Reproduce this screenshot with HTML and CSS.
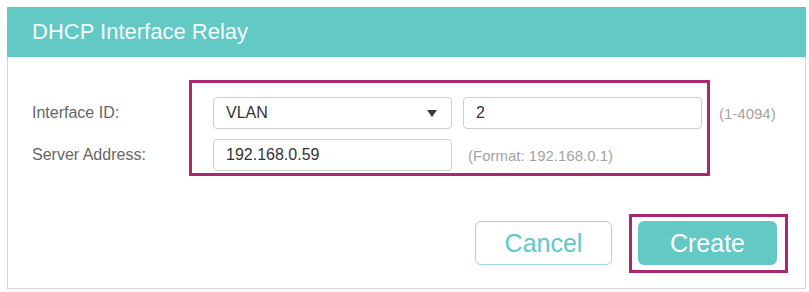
FILE: index.html
```html
<!DOCTYPE html>
<html lang="en">
<head>
    <meta charset="UTF-8">
    <title>DHCP Interface Relay</title>
    <link rel="stylesheet" href="styles.css">
</head>
<body>
    <div class="panel">
        <div class="panel-header">DHCP Interface Relay</div>

        <div class="panel-body">
            <div class="form-row">
                <label class="field-label" for="ifType">Interface ID:</label>
                <div class="select-box" id="ifType">
                    <span>VLAN</span>
                    <span class="caret"></span>
                </div>
                <input class="text-input" type="text" value="2">
                <span class="hint">(1-4094)</span>
            </div>
            <div class="form-row">
                <label class="field-label" for="server">Server Address:</label>
                <input class="text-input" id="server" type="text" value="192.168.0.59">
                <span class="hint hint-format">(Format: 192.168.0.1)</span>
            </div>

            <div class="actions">
                <button class="btn btn-cancel">Cancel</button>
                <button class="btn btn-create">Create</button>
            </div>
        </div>

        <!-- highlight boxes from the tutorial screenshot -->
        <div class="highlight highlight-fields"></div>
        <div class="highlight highlight-create"></div>
    </div>
</body>
</html>
```

FILE: styles.css
```css
body {
    margin: 0;
    background-color: #ffffff;
    font-family: "Liberation Sans", Arial, sans-serif;
}
.panel {
    position: relative;
    margin: 7px 3px 2px 7px;
    border: 1px solid #d4d4d4;
    border-top: none;
    height: 282px;
    box-sizing: border-box;
}
.panel-header {
    height: 50px;
    margin-left: -1px;
    margin-right: -1px;
    background-color: #62c9c5;
    color: #f4fbfb;
    font-size: 22px;
    line-height: 50px;
    padding-left: 25px;
}
.panel-body {
    padding: 40px 28px 0 24px;
}
.form-row {
    display: flex;
    align-items: center;
    height: 32px;
    margin-bottom: 10px;
}
.field-label {
    width: 181px;
    color: #666666;
    font-size: 16px;
}
.select-box, .text-input {
    width: 239px;
    height: 32px;
    box-sizing: border-box;
    border: 1px solid #cfcfcf;
    border-radius: 4px;
    padding: 0 12px;
    font-family: "Liberation Sans", Arial, sans-serif;
    font-size: 16px;
    color: #333333;
    background-color: #ffffff;
}
.select-box {
    display: flex;
    align-items: center;
    justify-content: space-between;
    margin-right: 11px;
    padding-right: 14px;
}
.caret {
    width: 0;
    height: 0;
    border-left: 5px solid transparent;
    border-right: 5px solid transparent;
    border-top: 7px solid #3a3a3a;
}
.text-input {
    outline: none;
}
.hint {
    margin-left: 17px;
    color: #a3a3a3;
    font-size: 15px;
}
.hint-format {
    margin-left: 16px;
}
.actions {
    display: flex;
    justify-content: flex-end;
    gap: 26px;
    margin-top: 50px;
}
.btn {
    height: 44px;
    border-radius: 6px;
    font-family: "Liberation Sans", Arial, sans-serif;
    font-size: 25px;
    cursor: pointer;
}
.btn-cancel {
    width: 137px;
    background-color: #ffffff;
    border: 1px solid #9ad9d6;
    color: #62c9c5;
}
.btn-create {
    width: 139px;
    background-color: #62c9c5;
    border: none;
    color: #ffffff;
}
.highlight {
    position: absolute;
    border: 3px solid #a8296f;
    box-sizing: border-box;
}
.highlight-fields {
    left: 181px;
    top: 73px;
    width: 521px;
    height: 96px;
}
.highlight-create {
    left: 621px;
    top: 207px;
    width: 159px;
    height: 59px;
}
```
